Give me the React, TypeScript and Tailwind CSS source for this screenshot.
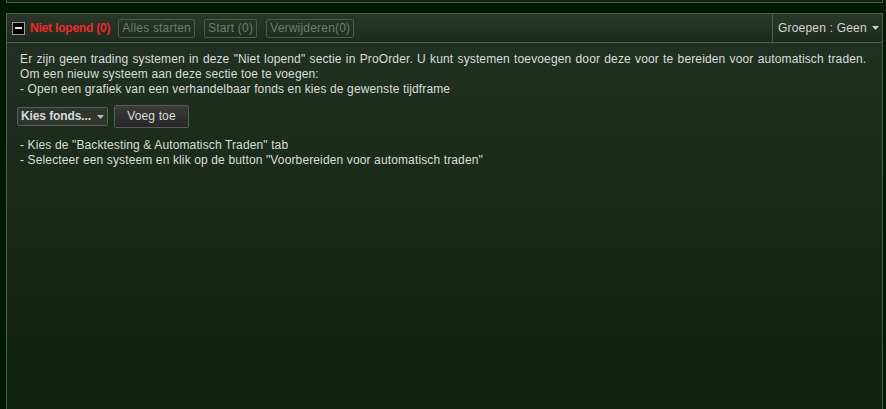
import React from "react";

function Caret({ className = "" }: { className?: string }) {
  return (
    <svg width="7" height="4" viewBox="0 0 7 4" className={className}>
      <path d="M0 0 L7 0 L3.5 4 Z" fill="currentColor" />
    </svg>
  );
}

function DisabledBtn({ children }: { children: React.ReactNode }) {
  return (
    <div className="h-[19px] px-[3px] flex items-center border border-[#4b5a4b] rounded-[2px] text-[#6f7d6f] text-[12px] leading-none tracking-[0.2px] whitespace-nowrap">
      {children}
    </div>
  );
}

export default function App() {
  return (
    <div
      className="w-[886px] h-[409px] bg-[#011901] overflow-hidden"
      style={{ fontFamily: '"Liberation Sans", Arial, sans-serif' }}
    >
      <div className="ml-[6px] w-[877px] h-[3px] bg-[#142414] border-l border-r border-b border-[#4e5e4e]" />
      <div className="mt-[10px] ml-[6px] w-[877px] h-[396px] border-l border-r border-t border-[#4e5e4e] flex flex-col">
        <div className="h-[29px] flex border-b border-[#4e5e4e] bg-gradient-to-b from-[#2a382a] to-[#1d2a1d]">
          <div className="flex-1 flex items-center pl-[5px]">
            <div className="w-[13px] h-[13px] border border-[#9a9a9a] bg-black flex items-center justify-center">
              <div className="w-[7px] h-[2px] bg-[#e8e8e8]" />
            </div>
            <span className="ml-[5px] text-[#ee2a2a] font-bold text-[12px] tracking-[-0.2px] whitespace-nowrap">Niet lopend (0)</span>
            <div className="ml-[8px] flex gap-[9px]">
              <DisabledBtn>Alles starten</DisabledBtn>
              <DisabledBtn>Start (0)</DisabledBtn>
              <DisabledBtn>Verwijderen(0)</DisabledBtn>
            </div>
          </div>
          <div className="w-[110px] border-l border-[#4e5e4e] flex items-center pl-[5px] text-[#d6d6d6] text-[12px] tracking-[0.2px] whitespace-nowrap">
            <span>Groepen : Geen</span>
            <Caret className="ml-[5px] text-[#cfcfcf]" />
          </div>
        </div>
        <div className="flex-1 bg-gradient-to-b from-[#213121] to-[#0f210f] px-[13px] pt-[9px] text-[12px] leading-[15px] text-[#dcdcdc] tracking-[0.13px]">
          <div className="whitespace-nowrap [word-spacing:0.75px]">
            Er zijn geen trading systemen in deze "Niet lopend" sectie in ProOrder. U kunt systemen toevoegen door deze voor te bereiden voor automatisch traden.
          </div>
          <div>Om een nieuw systeem aan deze sectie toe te voegen:</div>
          <div>- Open een grafiek van een verhandelbaar fonds en kies de gewenste tijdframe</div>
          <div className="mt-[8px] flex items-center gap-[6px] -ml-[3px]">
            <div className="h-[19px] w-[91px] pl-[3px] flex items-center border border-[#5a5a5a] rounded-[2px] bg-[#2e352e] text-[#d8d8d8] font-bold text-[12px] tracking-[-0.1px] whitespace-nowrap">
              <span>Kies fonds...</span>
              <Caret className="ml-[6px] text-[#bbbbbb]" />
            </div>
            <div className="h-[23px] w-[75px] flex items-center justify-center border border-[#5a5a5a] rounded-[2px] bg-gradient-to-b from-[#3b3b3b] to-[#272727] text-[#dcdcdc] text-[12px]">
              Voeg toe
            </div>
          </div>
          <div className="mt-[10px]">- Kies de "Backtesting &amp; Automatisch Traden" tab</div>
          <div>- Selecteer een systeem en klik op de button "Voorbereiden voor automatisch traden"</div>
        </div>
      </div>
    </div>
  );
}
